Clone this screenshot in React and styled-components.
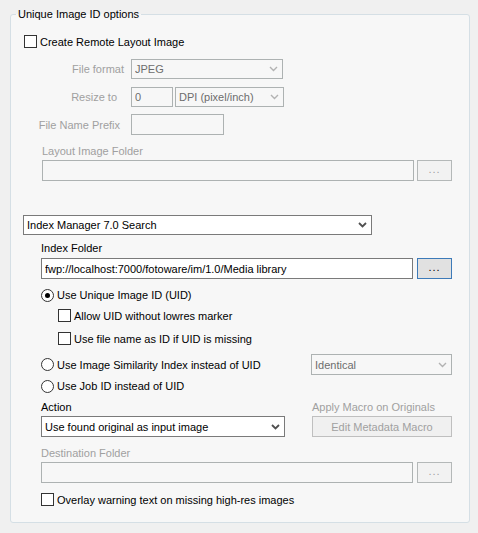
import styled, { createGlobalStyle } from "styled-components";

const GlobalStyle = createGlobalStyle`
  html, body {
    margin: 0;
    padding: 0;
    background: #f0f0f0;
  }
  body {
    font-family: "Liberation Sans", Arial, sans-serif;
    font-size: 11px;
    color: #000;
  }
`;

const Page = styled.div`
  width: 478px;
  height: 533px;
  box-sizing: border-box;
  padding: 14px 8px 10px 10px;
`;

const Group = styled.div`
  position: relative;
  box-sizing: border-box;
  height: 509px;
  border: 1px solid #d5dfe5;
  border-radius: 3px;
  background: #f7f7f7;
  display: flex;
  flex-direction: column;
`;

const Legend = styled.span`
  position: absolute;
  top: -8px;
  left: 5px;
  padding: 0 2px;
  height: 14px;
  line-height: 14px;
  background: linear-gradient(#f0f0f0 50%, #f7f7f7 50%);
`;

const Row = styled.div`
  display: flex;
  align-items: center;
  height: ${(p) => p.h || 14}px;
  margin-top: ${(p) => p.mt || 0}px;
  padding-left: ${(p) => p.indent || 0}px;
  padding-right: 17px;
  white-space: nowrap;
  color: ${(p) => (p.disabled ? "#a0a0a0" : "#000")};
`;

const FieldLabel = styled.span`
  width: 120px;
  box-sizing: border-box;
  text-align: right;
  padding-right: ${(p) => p.pr || 7}px;
  color: #a0a0a0;
`;

const Box = styled.div`
  box-sizing: border-box;
  width: ${(p) => p.w}px;
  height: ${(p) => p.h || 21}px;
  border: 1px solid ${(p) => (p.disabled ? "#adb2b2" : "#7a7a7a")};
  background: ${(p) => (p.disabled ? "#f7f7f7" : "#fff")};
  color: ${(p) => (p.disabled ? "#6d6d6d" : "#000")};
  display: flex;
  align-items: center;
  padding: 0 4px 0 3px;
  margin-left: ${(p) => p.ml || "0"};
  overflow: hidden;
`;

const BoxText = styled.span`
  flex: 1;
  overflow: hidden;
`;

const DotsButton = styled.div`
  box-sizing: border-box;
  width: 35px;
  height: 21px;
  margin-left: auto;
  border: 1px solid ${(p) => (p.disabled ? "#b4b8b8" : "#3d7ab8")};
  background: ${(p) => (p.disabled ? "#f2f2f2" : "#e1e1e1")};
  color: ${(p) => (p.disabled ? "#a0a0a0" : "#000")};
  display: flex;
  align-items: center;
  justify-content: center;
  padding-bottom: 3px;
  letter-spacing: 1px;
`;

const PushButton = styled.div`
  box-sizing: border-box;
  width: 140px;
  height: 21px;
  border: 1px solid #bfbfbf;
  background: #f0f0f0;
  color: #a0a0a0;
  display: flex;
  align-items: center;
  justify-content: center;
`;

const Check = styled.span`
  box-sizing: border-box;
  width: 13px;
  height: 13px;
  border: 1px solid #333;
  background: #fff;
  margin-right: 3px;
  flex: none;
`;

const Radio = styled.span`
  box-sizing: border-box;
  width: 13px;
  height: 13px;
  border: 1px solid #333;
  border-radius: 50%;
  background: #fff;
  margin-right: 3px;
  flex: none;
  display: flex;
  align-items: center;
  justify-content: center;
  &::after {
    content: "";
    display: ${(p) => (p.checked ? "block" : "none")};
    width: 5px;
    height: 5px;
    border-radius: 50%;
    background: #000;
  }
`;

const TwoCol = styled.div`
  display: grid;
  grid-template-columns: 244px 140px;
  justify-content: space-between;
  align-items: center;
  height: ${(p) => p.h || 14}px;
  margin-top: ${(p) => p.mt || 0}px;
  padding: 0 17px 0 30px;
  white-space: nowrap;
`;

const Muted = styled.span`
  color: #a0a0a0;
`;

const Chevron = ({ disabled }) => (
  <svg width="9" height="6" viewBox="0 0 9 6">
    <polyline
      points="1,1 4.5,4.5 8,1"
      fill="none"
      stroke={disabled ? "#b2b2b2" : "#505050"}
      strokeWidth={disabled ? 1.4 : 1.8}
    />
  </svg>
);

const Select = ({ w, disabled, children, ml, h }) => (
  <Box w={w} disabled={disabled} ml={ml} h={h || 20}>
    <BoxText>{children}</BoxText>
    <Chevron disabled={disabled} />
  </Box>
);

export default function App() {
  return (
    <Page>
      <GlobalStyle />
      <Group>
        <Legend>Unique Image ID options</Legend>

        <Row mt={20} h={13} indent={13}>
          <Check />
          Create Remote Layout Image
        </Row>

        <Row mt={11} h={20}>
          <FieldLabel pr={7}>File format</FieldLabel>
          <Select w={152} disabled>
            JPEG
          </Select>
        </Row>

        <Row mt={8} h={20}>
          <FieldLabel pr={14}>Resize to</FieldLabel>
          <Box w={42} h={20} disabled>
            <BoxText>0</BoxText>
          </Box>
          <Select w={109} ml="2px" disabled>
            DPI (pixel/inch)
          </Select>
        </Row>

        <Row mt={7} h={21}>
          <FieldLabel pr={11}>File Name Prefix</FieldLabel>
          <Box w={93} disabled />
        </Row>

        <Row mt={9} indent={31} disabled>
          Layout Image Folder
        </Row>
        <Row mt={2} h={21} indent={31}>
          <Box w={372} disabled />
          <DotsButton disabled>...</DotsButton>
        </Row>

        <Row mt={33} h={21} indent={12}>
          <Select w={349}>Index Manager 7.0 Search</Select>
        </Row>

        <Row mt={6} indent={30}>
          Index Folder
        </Row>
        <Row mt={3} h={21} indent={30}>
          <Box w={372}>
            <BoxText>fwp://localhost:7000/fotoware/im/1.0/Media library</BoxText>
          </Box>
          <DotsButton>...</DotsButton>
        </Row>

        <Row mt={9} indent={30}>
          <Radio checked />
          Use Unique Image ID (UID)
        </Row>
        <Row mt={7} h={13} indent={47}>
          <Check />
          Allow UID without lowres marker
        </Row>
        <Row mt={10} h={13} indent={47}>
          <Check />
          Use file name as ID if UID is missing
        </Row>

        <Row mt={9} h={21} indent={30}>
          <Radio />
          Use Image Similarity Index instead of UID
          <Select w={141} h={21} ml="auto" disabled>
            Identical
          </Select>
        </Row>

        <Row mt={4} indent={30}>
          <Radio />
          Use Job ID instead of UID
        </Row>

        <TwoCol mt={7}>
          <span>Action</span>
          <Muted>Apply Macro on Originals</Muted>
        </TwoCol>
        <TwoCol mt={2} h={21}>
          <Select w={244} h={21}>
            Use found original as input image
          </Select>
          <PushButton>Edit Metadata Macro</PushButton>
        </TwoCol>

        <Row mt={9} indent={30} disabled>
          Destination Folder
        </Row>
        <Row mt={2} h={21} indent={30}>
          <Box w={372} disabled />
          <DotsButton disabled>...</DotsButton>
        </Row>

        <Row mt={10} h={13} indent={30}>
          <Check />
          Overlay warning text on missing high-res images
        </Row>
      </Group>
    </Page>
  );
}
